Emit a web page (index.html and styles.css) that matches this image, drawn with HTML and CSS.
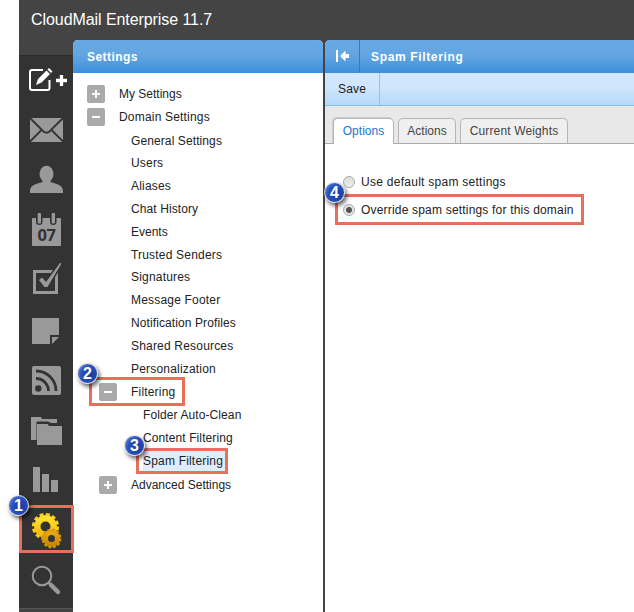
FILE: index.html
```html
<!DOCTYPE html>
<html lang="en">
<head>
<meta charset="utf-8">
<title>CloudMail Enterprise</title>
<link rel="stylesheet" href="styles.css">
</head>
<body>
<div class="app">
  <header class="topbar">CloudMail Enterprise 11.7</header>
  <div class="main">
    <nav class="rail">
      <svg class="icon compose" viewBox="0 0 54 50"><path d="M24 15H13Q11 15 11 17V33Q11 35 13 35H28.500Q30.500 35 30.500 33V25" fill="none" stroke="#fff" stroke-width="2"/><path d="M17 30L19 24L27.500 15.500L31 19L22.500 27.500ZM28.500 14.500L30 13L33.500 16.500L32 18Z" fill="#fff"/><path d="M37 25.500H48M42.500 20V31" stroke="#fff" stroke-width="3.300"/></svg>
      <svg class="icon" viewBox="0 0 54 50"><path d="M11 13H44V37H11Z"/><path class="cut" d="M11 13L24.500 26.500Q27.500 29 30.500 26.500L44 13M11 36.500L22 25.500M44 36.500L33 25.500"/></svg>
      <svg class="icon" viewBox="0 0 54 50"><ellipse cx="27.500" cy="19" rx="7" ry="8.300"/><path d="M23.500 24H31.500V27C35 28.500 44 29 44 36V38H11V36C11 29 20 28.500 23.500 27Z"/></svg>
      <svg class="icon" viewBox="0 0 54 50"><rect x="13" y="13" width="29" height="28" rx="1"/><path class="ring-gap" d="M17 12V17Q17 20 20.200 20T23.500 17V12M31 12V17Q31 20 34.200 20T37.500 17V12"/><rect x="18.700" y="8" width="3.300" height="10.500" rx="1"/><rect x="32.700" y="8" width="3.300" height="10.500" rx="1"/><text class="day" x="27.500" y="36" text-anchor="middle">07</text></svg>
      <svg class="icon" viewBox="0 0 54 50"><path d="M15.500 16.500H37.500V37.500H15.500Z" fill="none" stroke="#999" stroke-width="3"/><path d="M20 25L23 22.500L27 27L41 8L42.500 8.500L28.500 32L25.500 32Z" stroke="#333" stroke-width="3" paint-order="stroke"/></svg>
      <svg class="icon" viewBox="0 0 54 50"><path d="M13 13H40V30H31V39H13ZM33 32H40L33 39Z"/></svg>
      <svg class="icon" viewBox="0 0 54 50"><rect x="13" y="11" width="29" height="29" rx="2"/><circle cx="19.300" cy="33.500" r="3.200" fill="#333"/><path class="wave" d="M17 23.500A12.500 12.500 0 0 1 29.500 36M17 16A20 20 0 0 1 37 36"/></svg>
      <svg class="icon" viewBox="0 0 54 50"><path d="M12 12H22L23 14H38V18H32L29 16.500H17.500V35H12Z"/><path d="M18 19H28.500L30 21H43V40H18Z"/></svg>
      <svg class="icon" viewBox="0 0 54 50"><path d="M14 12H21V37H14ZM23 19H30V37H23ZM32 25H39V37H32Z"/></svg>
      <div class="rail-current">
        <svg class="icon" viewBox="0 0 54 50">
          <defs><linearGradient id="gold" x2="0" y2="1"><stop stop-color="#ffe02e"/><stop offset="1" stop-color="#f1b90c"/></linearGradient><linearGradient id="amber" x2="0" y2="1"><stop stop-color="#eaa914"/><stop offset="1" stop-color="#c98505"/></linearGradient></defs>
          <circle cx="26.500" cy="21.500" r="8.200" fill="none" stroke="url(#gold)" stroke-width="6.400"/><circle cx="26.500" cy="21.500" r="12.200" fill="none" stroke="#fad022" stroke-width="2.800" stroke-dasharray="3.900 2.488"/>
          <circle cx="32.500" cy="33.500" r="8.600" fill="#333"/><circle cx="32.500" cy="33.500" r="6" fill="none" stroke="url(#amber)" stroke-width="5"/><circle cx="32.500" cy="33.500" r="8.800" fill="none" stroke="#d9960d" stroke-width="2.200" stroke-dasharray="3 1.608"/>
        </svg>
        <span class="badge badge-rail">1</span>
      </div>
      <svg class="icon" viewBox="0 0 54 50"><circle cx="23" cy="21" r="9.300" fill="none" stroke="#999" stroke-width="2"/><path d="M29.500 27.500L32 30" stroke="#999" stroke-width="2.500"/><path d="M32 30L39 37" stroke="#999" stroke-width="4.500" stroke-linecap="round"/></svg>
      <div class="rail-end"></div>
    </nav>
    <section class="panel settings">
      <h2 class="panel-head">Settings</h2>
      <ul class="tree">
        <li class="l0 tight"><i class="toggle plus"></i><span>My Settings</span></li>
        <li class="l0"><i class="toggle"></i><span>Domain Settings</span></li>
        <li class="l1 snug"><span>General Settings</span></li>
        <li class="l1"><span>Users</span></li>
        <li class="l1"><span>Aliases</span></li>
        <li class="l1 snug"><span>Chat History</span></li>
        <li class="l1 tight"><span>Events</span></li>
        <li class="l1"><span>Trusted Senders</span></li>
        <li class="l1"><span>Signatures</span></li>
        <li class="l1"><span>Message Footer</span></li>
        <li class="l1 snug"><span>Notification Profiles</span></li>
        <li class="l1"><span>Shared Resources</span></li>
        <li class="l1"><span>Personalization</span></li>
        <li class="l1"><i class="toggle"></i><span>Filtering</span><b class="callout callout-filtering"></b><b class="badge badge-filtering">2</b></li>
        <li class="l2 snug"><span>Folder Auto-Clean</span></li>
        <li class="l2 snug"><span>Content Filtering</span></li>
        <li class="l2"><span class="selected">Spam Filtering</span><b class="callout callout-spam"></b><b class="badge badge-spam">3</b></li>
        <li class="l1 tight"><i class="toggle plus"></i><span>Advanced Settings</span></li>
      </ul>
    </section>
    <section class="panel content">
      <div class="panel-head detail-head">
        <span class="collapse"><svg viewBox="0 0 14 14" width="14" height="14"><path d="M0 1H2V13H0ZM4 7L9.500 1.500V5H13V9H9.500V12.500Z" fill="#fff"/></svg></span>
        <h2>Spam Filtering</h2>
      </div>
      <div class="toolbar"><span class="save">Save</span></div>
      <div class="tabs">
        <span class="tab active">Options</span>
        <span class="tab actions">Actions</span>
        <span class="tab weights">Current Weights</span>
      </div>
      <div class="choices">
        <div class="choice loose"><i class="radio"></i><span>Use default spam settings</span></div>
        <div class="choice"><i class="radio on"></i><span>Override spam settings for this domain</span><b class="callout callout-choice"></b><b class="badge badge-choice">4</b></div>
      </div>
    </section>
  </div>
</div>
</body>
</html>
```
FILE: styles.css
```css
*, *::after { box-sizing: border-box; }
body { margin: 0; background: #fff; font: 12px/16px "Liberation Sans", Arial, sans-serif; color: #222; letter-spacing: .19px; }
h2 { margin: 0; font-size: 12px; line-height: 16px; }
.app { height: 612px; margin-left: 19px; background: #444; display: flex; flex-direction: column; }
.topbar { height: 40px; padding: 10px 12px; color: #fff; font-size: 16px; line-height: 20px; letter-spacing: -.07px; }
.main { display: flex; height: 572px; }
.rail { width: 54px; margin-top: 15px; background: #333; border-top: 1px solid #2b2b2b; display: flex; flex-direction: column; flex: none; }
.icon { width: 54px; height: 50px; display: block; fill: #999; margin-top: -1px; margin-bottom: 1px; flex: none; }
.cut { fill: none; stroke: #333; stroke-width: 1.8; }
.ring-gap { fill: #333; }
.day { font: bold 16.5px "Open Sans", sans-serif; fill: #333; letter-spacing: -.5px; }
.wave { fill: none; stroke: #333; stroke-width: 2.8; }
.rail-current { position: relative; height: 50px; flex: none; }
.rail-current::after { content: ""; position: absolute; left: 0; top: -1px; width: 55px; height: 48px; border: 3px solid #e7705a; z-index: 2; }
.rail-end { height: 4px; margin-top: auto; background: #444; border-top: 1px solid #555; flex: none; }
.panel { background: #fff; border-radius: 5px 5px 0 0; }
.settings { width: 250px; flex: none; margin-right: 2px; }
.content { flex: 1; border-top-right-radius: 0; }
.panel-head { height: 33px; padding: 9px 14px 8px; border-radius: 5px 5px 0 0; background: linear-gradient(#68a9e4 0%, #63a6e2 45%, #3d8fda 100%); color: #fff; letter-spacing: .45px; }
.detail-head { padding: 0; display: flex; align-items: center; letter-spacing: .65px; border-top-right-radius: 0; }
.collapse { width: 35px; height: 33px; padding: 9px 11px; border-right: 1px solid #287fce; }
.collapse svg { display: block; }
.detail-head h2 { padding-left: 11px; }
.tree { list-style: none; margin: 0; padding: 9px 0 0; display: grid; grid-template-rows: 23px 24px 23px 22px 23px 23px 23px 23px 22px 23px 23px 23px 23px 23px 23px 23px 23px 26px; }
.tree li { position: relative; display: flex; align-items: center; white-space: nowrap; }
.l0 { padding-left: 46px; }
.l1 { padding-left: 58px; }
.l2 { padding-left: 70px; }
.tight { letter-spacing: 0; }
.snug { letter-spacing: .1px; }
.loose { letter-spacing: .27px; }
.toggle { width: 18px; height: 18px; margin-left: -32px; margin-right: 14px; border-radius: 2px; background: linear-gradient(#fff, #fff) center / 8px 2px no-repeat, #aaa; }
.plus { background: linear-gradient(#fff, #fff) center / 8px 2px no-repeat, linear-gradient(#fff, #fff) center / 2px 8px no-repeat, #aaa; }
.selected { background: #ddefff; height: 20px; width: 82px; line-height: 20px; }
.callout { position: absolute; border: 3px solid #e7705a; }
.callout-filtering { left: 16px; top: -3px; width: 96px; height: 29px; }
.callout-spam { left: 63px; top: -1px; width: 92px; height: 26px; }
.callout-choice { left: -8px; top: -8px; width: 249px; height: 31px; }
.badge { position: absolute; z-index: 3; width: 21px; height: 21px; border-radius: 50%; border: 1px solid #ddd; background: radial-gradient(circle at 65% 60%, #173a9e, #2852bd 55%, #8da8e5); box-shadow: 2px 3px 4px #0009; color: #fff; font: bold 16px/19px "Liberation Sans", sans-serif; text-align: center; letter-spacing: 0; }
.badge-rail { left: -11px; top: -11px; }
.badge-filtering { left: 4px; top: -17px; }
.badge-spam { left: 51px; top: -14px; }
.badge-choice { left: -19px; top: -20px; }
.toolbar { height: 33px; display: flex; background: linear-gradient(#d3e8fc, #cfe5fc 45%, #b7d9f8); border-bottom: 1px solid #82bff3; }
.save { width: 55px; padding: 8px 13px; border-right: 1px solid #8fc5f5; }
.tabs { height: 38px; padding: 12px 8px 0; display: flex; gap: 4px; background: #e8e8e8; border-bottom: 1px solid #aaa; letter-spacing: .05px; }
.tab { height: 25px; border: 1px solid #b5b5b5; border-bottom: 0; border-radius: 5px 5px 0 0; background: #efefef; color: #444; line-height: 25px; text-align: center; white-space: nowrap; }
.active { width: 61px; height: 26px; background: #fff; color: #1a75c4; box-shadow: -1px -1px 1px #ccc; }
.actions { width: 58px; }
.weights { width: 108px; letter-spacing: .14px; }
.choices { padding: 30px 0 0 18px; display: flex; flex-direction: column; gap: 12px; }
.choice { position: relative; display: flex; align-items: center; height: 16px; white-space: nowrap; }
.radio { width: 12px; height: 12px; margin-right: 6px; border: 1px solid #aaa; border-radius: 50%; background: linear-gradient(#ddd, #eee); }
.on { background: radial-gradient(circle, #555 0 2.6px, #e5e5e5 3.4px); }
```
